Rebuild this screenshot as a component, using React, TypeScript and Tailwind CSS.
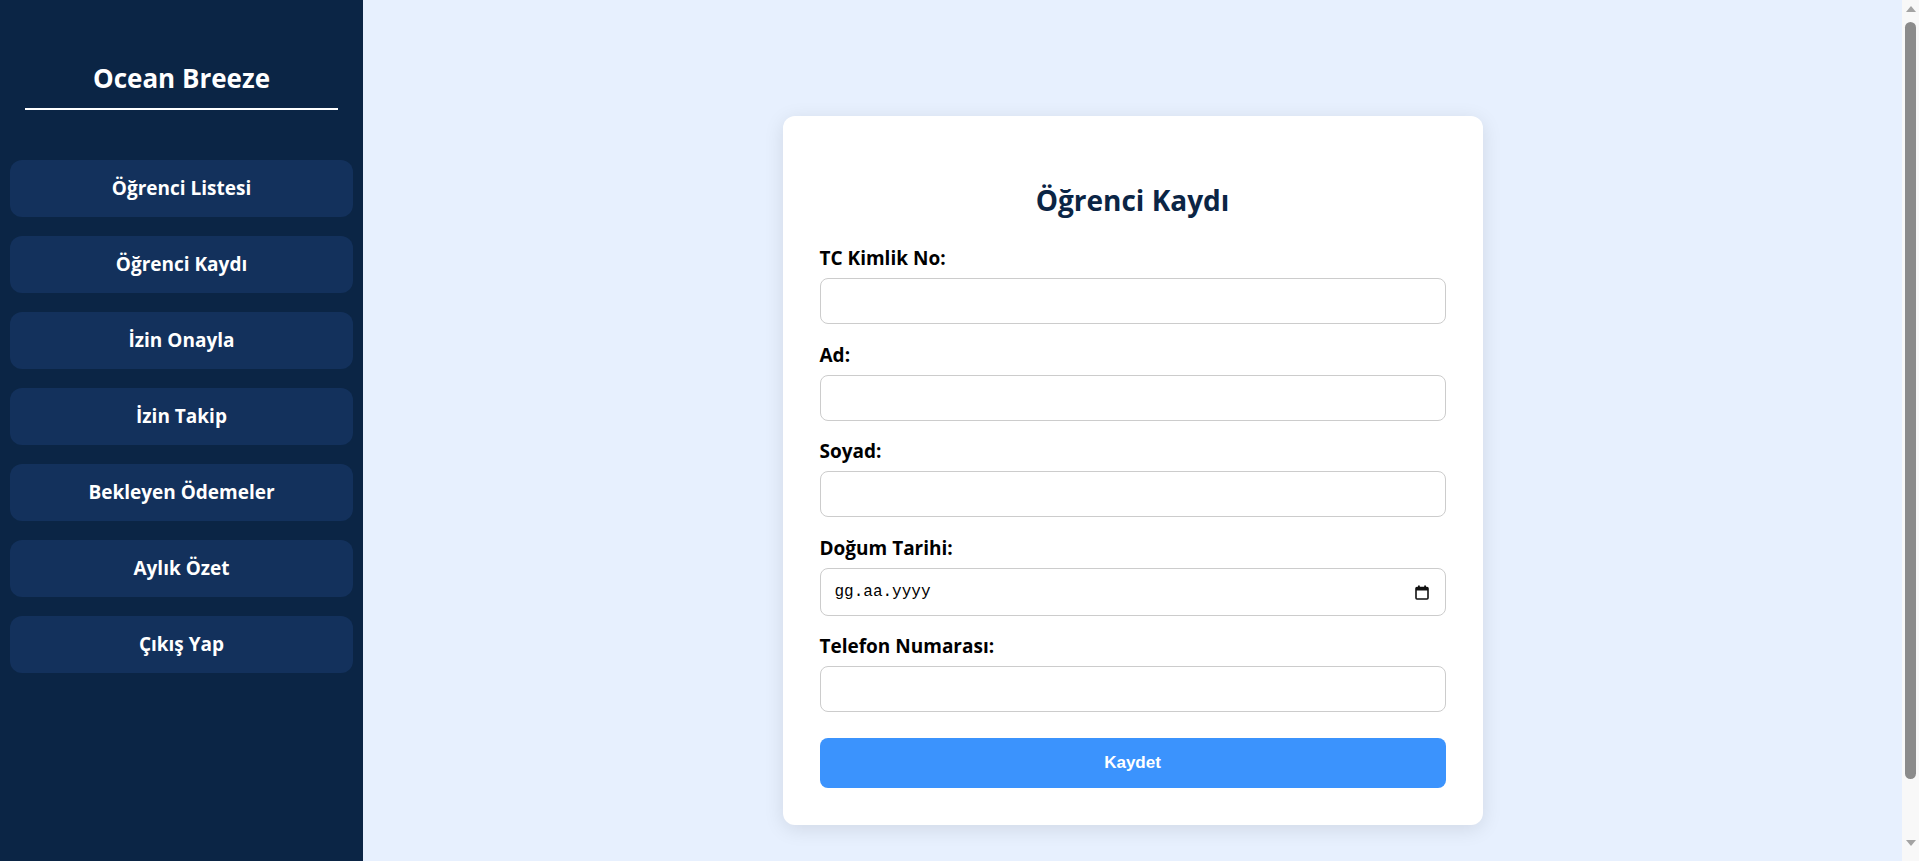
import React from "react";

const navItems = [
  "Öğrenci Listesi",
  "Öğrenci Kaydı",
  "İzin Onayla",
  "İzin Takip",
  "Bekleyen Ödemeler",
  "Aylık Özet",
  "Çıkış Yap",
];

function CalendarIcon() {
  return (
    <svg width="14" height="15" viewBox="0 0 14 15" fill="none">
      <rect x="1" y="2.5" width="12" height="11.5" rx="1" stroke="#111" strokeWidth="1.6" fill="none" />
      <rect x="1" y="2.5" width="12" height="3" fill="#111" />
      <rect x="3" y="0.5" width="1.8" height="3" fill="#111" />
      <rect x="9.2" y="0.5" width="1.8" height="3" fill="#111" />
    </svg>
  );
}

function Field({
  label,
  mb,
  children,
}: {
  label: string;
  mb: string;
  children: React.ReactNode;
}) {
  return (
    <div className={mb}>
      <label className="block text-[19px] leading-[24px] font-bold text-black mb-[8px]">{label}</label>
      {children}
    </div>
  );
}

function Scrollbar() {
  return (
    <div className="w-[17px] shrink-0 bg-[#f8f8f8]">
      <div className="h-[861px] flex flex-col items-center pt-[6px]">
        <svg width="10" height="6" viewBox="0 0 10 6">
          <polygon points="5,0 10,6 0,6" fill="#a3a3a3" />
        </svg>
        <div className="mt-[10px] h-[757px] w-[11px] rounded-full bg-[#8b8b8b]" />
        <svg width="10" height="6" viewBox="0 0 10 6" className="mt-[61px]">
          <polygon points="0,0 10,0 5,6" fill="#a3a3a3" />
        </svg>
      </div>
    </div>
  );
}

export default function App() {
  const inputCls =
    "block w-full h-[46px] rounded-[8px] border border-[#cccccc] bg-white px-[12px] text-[16px] outline-none";
  return (
    <div className="flex min-h-screen font-['Open_Sans',sans-serif]">
      <aside className="w-[363px] shrink-0 bg-[#0b2545] flex flex-col">
        <div className="px-[25px] pt-[61px]">
          <h1 className="text-white text-[26px] leading-[34px] font-bold text-center pb-[13px] border-b-2 border-white">
            Ocean Breeze
          </h1>
        </div>
        <nav className="px-[10px] pt-[50px] flex flex-col gap-[19px]">
          {navItems.map((item) => (
            <button
              key={item}
              className="h-[57px] w-full rounded-[12px] bg-[#13315c] text-white text-[19px] font-bold flex items-center justify-center"
            >
              {item}
            </button>
          ))}
        </nav>
      </aside>
      <main className="flex-1 bg-[#e7f0fe] min-h-[941px] py-[40px] flex items-center justify-center">
        <div className="w-[700px] bg-white rounded-[12px] shadow-[0_4px_20px_rgba(0,0,0,0.1)] px-[37px] pt-[66px] pb-[37px]">
          <h2 className="text-[#0b2545] text-[28px] leading-[36px] font-bold text-center mb-[28px]">
            Öğrenci Kaydı
          </h2>
          <Field label="TC Kimlik No:" mb="mb-[19px]">
            <input type="text" className={inputCls} />
          </Field>
          <Field label="Ad:" mb="mb-[18px]">
            <input type="text" className={inputCls} />
          </Field>
          <Field label="Soyad:" mb="mb-[19px]">
            <input type="text" className={inputCls} />
          </Field>
          <Field label="Doğum Tarihi:" mb="mb-[18px]">
            <div className="flex items-center justify-between w-full h-[48px] rounded-[8px] border border-[#cccccc] bg-white pl-[14px] pr-[16px]">
              <span className="font-['Liberation_Mono',monospace] text-[16px] text-black">gg.aa.yyyy</span>
              <CalendarIcon />
            </div>
          </Field>
          <Field label="Telefon Numarası:" mb="mb-[26px]">
            <input type="tel" className={inputCls} />
          </Field>
          <button className="w-full h-[50px] rounded-[8px] bg-[#3b93fd] text-white text-[17px] font-bold font-['Liberation_Sans',Arial,sans-serif]">
            Kaydet
          </button>
        </div>
      </main>
      <Scrollbar />
    </div>
  );
}
